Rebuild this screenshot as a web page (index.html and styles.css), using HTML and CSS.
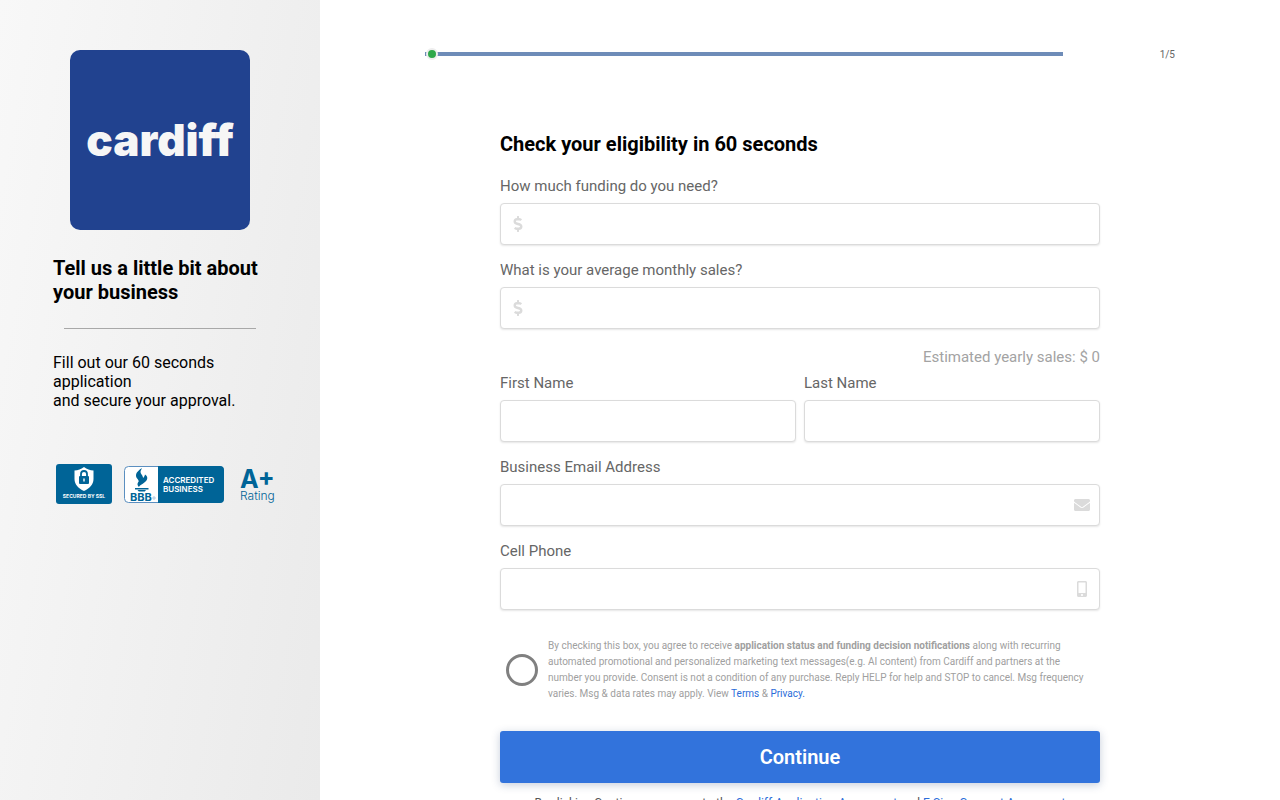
FILE: index.html
```html
<!DOCTYPE html>
<html lang="en">
<head>
  <meta charset="utf-8">
  <meta name="viewport" content="width=device-width, initial-scale=1">
  <title>Cardiff Application</title>
  <link rel="stylesheet" href="styles.css">
</head>
<body>
  <div class="page">
    <aside class="sidebar">
      <svg class="logo" viewBox="0 0 180 180" role="img" aria-label="cardiff">
        <rect width="180" height="180" rx="10" fill="#21428f"/>
        <text class="logo-text" x="90" y="106" text-anchor="middle">cardiff</text>
      </svg>

      <h2>Tell us a little bit about your business</h2>
      <hr>
      <p>Fill out our 60 seconds application<br>and secure your approval.</p>

      <svg class="badges" viewBox="0 0 220 40" role="img" aria-label="Secured by SSL, BBB Accredited Business, A+ Rating">
        <!-- SSL -->
        <rect width="56" height="40" rx="3" fill="#006497"/>
        <path d="M28 3c3 2.4 6 3.4 9.500 3.600V15c0 5.500-3.800 9.300-9.500 12-5.700-2.700-9.500-6.500-9.500-12V6.600C22 6.400 25 5.400 28 3z" fill="#fff"/>
        <rect x="23" y="12" width="10" height="8" rx="1" fill="#006497"/>
        <path d="M25 12.500v-2.500a3 3 0 0 1 6 0v2.500" fill="none" stroke="#006497" stroke-width="1.800"/>
        <path d="M28 14.500v3" stroke="#fff" stroke-width="1.400"/>
        <text class="ssl-text" x="28" y="34" text-anchor="middle">SECURED BY SSL</text>
        <!-- BBB -->
        <rect x="68.500" y="2.500" width="99" height="36" rx="4" fill="#fff" stroke="#5b8fc0"/>
        <path d="M102 2h62a4 4 0 0 1 4 4v29a4 4 0 0 1-4 4h-62z" fill="#006497"/>
        <path d="M86 4c-3 2-6 4.500-6 7.500 0 3.500 4 4 2.500 8 3-1.500 5-3.500 4.500-6-.4-2.500-2.500-3.500-2.500-5.500 0-1.500 1-2.500 1.500-4z" fill="#006497"/>
        <path d="M89 10.500c-.5 4-5 5-7 8-1 1.500-.5 3 1 4.500 1-2.500 6.500-4 8-7.500.8-2 0-4-2-5z" fill="#006497"/>
        <path d="M79 24h13.500v1.600H79zM81.500 26h8.500l-1.200 1.500h-6z" fill="#006497"/>
        <text class="bbb-text" x="74" y="37">BBB</text>
        <circle cx="98" cy="34" r="1.200" fill="none" stroke="#5b8fc0" stroke-width=".5"/>
        <text class="accredited-text" x="107" y="19">ACCREDITED</text>
        <text class="accredited-text" x="107" y="28">BUSINESS</text>
        <!-- Rating -->
        <text class="grade-text" x="184" y="24">A+</text>
        <text class="rating-text" x="184" y="36">Rating</text>
      </svg>
    </aside>

    <main class="main">
      <div class="progress">
        <div class="progress-track"><span class="progress-dot"></span></div>
        <span class="progress-step">1/5</span>
      </div>

      <form class="form">
        <h1>Check your eligibility in 60 seconds</h1>

        <div class="field">
          <label for="funding">How much funding do you need?</label>
          <div class="control">
            <svg class="icon icon-left" viewBox="0 0 288 512"><path d="M209.200 233.400l-108-31.600C88.700 198.200 80 186.500 80 173.500c0-16.300 13.200-29.500 29.500-29.500h66.300c12.200 0 24.200 3.700 34.200 10.500 6.100 4.100 14.300 3.100 19.500-2l34.800-34c7.100-6.900 6.100-18.400-1.800-24.500C238 74.800 207.400 64.100 176 64V16c0-8.800-7.200-16-16-16h-32c-8.800 0-16 7.200-16 16v48h-2.500C45.800 64-5.400 118.700.5 183.600c4.200 46.100 39.400 83.600 83.800 96.600l102.500 30c12.500 3.700 21.200 15.300 21.200 28.300 0 16.300-13.200 29.500-29.500 29.500h-66.300C100 368 88 364.300 78 357.500c-6.100-4.100-14.300-3.100-19.500 2l-34.800 34c-7.100 6.900-6.100 18.400 1.800 24.500 24.500 19.200 55.100 29.900 86.500 30v48c0 8.800 7.200 16 16 16h32c8.800 0 16-7.200 16-16v-48.200c46.600-.9 90.300-28.600 105.700-72.700 21.500-61.600-14.600-124.800-72.500-141.700z"/></svg>
            <input class="money" type="text" id="funding">
          </div>
        </div>

        <div class="field">
          <label for="sales">What is your average monthly sales?</label>
          <div class="control">
            <svg class="icon icon-left" viewBox="0 0 288 512"><path d="M209.200 233.400l-108-31.600C88.700 198.200 80 186.500 80 173.500c0-16.300 13.200-29.500 29.500-29.500h66.300c12.200 0 24.200 3.700 34.200 10.500 6.100 4.100 14.300 3.100 19.500-2l34.800-34c7.100-6.900 6.100-18.400-1.800-24.500C238 74.800 207.400 64.100 176 64V16c0-8.800-7.200-16-16-16h-32c-8.800 0-16 7.200-16 16v48h-2.500C45.800 64-5.400 118.700.5 183.600c4.200 46.100 39.400 83.600 83.800 96.600l102.500 30c12.500 3.700 21.200 15.300 21.200 28.300 0 16.300-13.200 29.500-29.500 29.500h-66.300C100 368 88 364.300 78 357.500c-6.100-4.100-14.300-3.100-19.500 2l-34.800 34c-7.100 6.900-6.100 18.400 1.800 24.500 24.500 19.200 55.100 29.900 86.500 30v48c0 8.800 7.200 16 16 16h32c8.800 0 16-7.200 16-16v-48.200c46.600-.9 90.300-28.600 105.700-72.700 21.500-61.600-14.600-124.800-72.500-141.700z"/></svg>
            <input class="money" type="text" id="sales">
          </div>
        </div>

        <div class="estimate">Estimated yearly sales: $ 0</div>

        <div class="field-row">
          <div class="field">
            <label for="firstName">First Name</label>
            <input type="text" id="firstName">
          </div>
          <div class="field">
            <label for="lastName">Last Name</label>
            <input type="text" id="lastName">
          </div>
        </div>

        <div class="field">
          <label for="email">Business Email Address</label>
          <div class="control">
            <input type="email" id="email">
            <svg class="icon icon-right" viewBox="0 0 512 512"><path d="M502.300 190.800c3.900-3.100 9.700-.2 9.700 4.700V400c0 26.500-21.500 48-48 48H48c-26.500 0-48-21.500-48-48V195.600c0-5 5.700-7.800 9.700-4.700 22.400 17.400 52.100 39.500 154.100 113.600 21.100 15.400 56.700 47.800 92.200 47.600 35.700.3 72-32.800 92.300-47.600 102-74.100 131.600-96.300 154-113.700zM256 320c23.200.4 56.600-29.200 73.400-41.400 132.700-96.300 142.800-104.700 173.400-128.700 5.800-4.500 9.200-11.500 9.200-18.900v-19c0-26.500-21.500-48-48-48H48c-26.500 0-48 21.500-48 48v19c0 7.400 3.400 14.300 9.200 18.900 30.600 23.900 40.700 32.400 173.400 128.700 16.800 12.200 50.200 41.800 73.400 41.400z"/></svg>
          </div>
        </div>

        <div class="field">
          <label for="phone">Cell Phone</label>
          <div class="control">
            <input type="tel" id="phone">
            <svg class="icon icon-right" viewBox="0 0 320 512"><path d="M272 0H48C21.500 0 0 21.500 0 48v416c0 26.500 21.500 48 48 48h224c26.500 0 48-21.500 48-48V48c0-26.500-21.500-48-48-48zM160 480c-17.700 0-32-14.300-32-32s14.300-32 32-32 32 14.300 32 32-14.300 32-32 32zm112-108c0 6.600-5.400 12-12 12H60c-6.600 0-12-5.400-12-12V60c0-6.600 5.400-12 12-12h200c6.600 0 12 5.400 12 12v312z"/></svg>
          </div>
        </div>

        <div class="consent">
          <input type="checkbox" id="consent">
          <label for="consent">By checking this box, you agree to receive <strong>application status and funding decision notifications</strong> along with recurring automated promotional and personalized marketing text messages(e.g. AI content) from Cardiff and partners at the number you provide. Consent is not a condition of any purchase. Reply HELP for help and STOP to cancel. Msg frequency varies. Msg &amp; data rates may apply. View <a href="#">Terms</a> &amp; <a href="#">Privacy.</a></label>
        </div>

        <button type="submit" class="continue-btn">Continue</button>

        <p class="agreement">By clicking Continue, you agree to the <a href="#">Cardiff Application Agreement</a> and <a href="#">E-Sign Consent Agreement</a></p>
      </form>
    </main>
  </div>
</body>
</html>
```

FILE: styles.css
```css
* {
  margin: 0;
  padding: 0;
  box-sizing: border-box;
}

body {
  font-family: Roboto, 'Liberation Sans', sans-serif;
  font-size: 16px;
  color: #000;
  background: #fff;
}

a {
  color: #2b6cd9;
  text-decoration: none;
}

.page {
  display: grid;
  grid-template-columns: 1fr 3fr;
  height: 100vh;
}

.sidebar {
  padding: 50px 44px 0 53px;
  background: linear-gradient(100deg, #f8f8f8, #eaeaea);
}

.logo {
  display: block;
  width: 180px;
  margin: 0 auto 26px 17px;
}

.logo-text {
  font-family: Inter, sans-serif;
  font-size: 44px;
  font-weight: 900;
  fill: #f6f6f6;
}

.sidebar h2 {
  font-size: 20px;
  font-weight: 700;
  line-height: 24px;
}

.sidebar hr {
  width: 192px;
  margin: 24px 0 24px 11px;
  border: none;
  border-top: 1px solid #a8a8a8;
}

.sidebar p {
  line-height: 19px;
}

.badges {
  display: block;
  width: 220px;
  margin: 54px 0 0 3px;
  font-family: Inter, sans-serif;
  font-weight: 700;
  fill: #006497;
}

.ssl-text {
  font-size: 5px;
  fill: #fff;
}

.bbb-text {
  font-size: 11px;
}

.accredited-text {
  font-size: 8px;
  font-weight: 600;
  fill: #fff;
}

.grade-text {
  font-size: 25px;
}

.rating-text {
  font-size: 12px;
  font-weight: 300;
}

.main {
  padding: 46px 105px 0;
  overflow-y: auto;
  scrollbar-width: none;
}

.progress {
  display: flex;
  align-items: center;
  justify-content: space-between;
  height: 16px;
}

.progress-track {
  width: 85%;
  height: 4px;
  display: flex;
  align-items: center;
  background: #6e8cb8;
}

.progress-dot {
  width: 12px;
  height: 12px;
  margin-left: 1px;
  flex-shrink: 0;
  border: 2px solid #eee;
  border-radius: 50%;
  background: #2ea84a;
}

.progress-step {
  font-size: 10px;
  color: #666;
}

.form {
  max-width: 600px;
  margin: 70px auto 0;
}

.form h1 {
  font-size: 20px;
  font-weight: 700;
  line-height: 24px;
  margin-bottom: 20px;
}

.field {
  margin-bottom: 15px;
}

.field label {
  display: block;
  font-size: 15px;
  line-height: 20px;
  margin-bottom: 7px;
  color: #666;
}

.field input {
  display: block;
  width: 100%;
  height: 42px;
  padding: 0 12px;
  border: 1px solid #dbdbdb;
  border-radius: 4px;
  font: inherit;
  background: #fff;
  box-shadow: 0 1px 2px rgba(10, 10, 10, 0.1);
}

.field input.money {
  padding-left: 36px;
}

.field input:focus {
  outline: none;
  border-color: #3273dc;
}

.control {
  position: relative;
}

/* icons sit over the inputs */
.icon {
  position: absolute;
  top: 13px;
  width: 36px;
  height: 16px;
  fill: #dbdbdb;
  pointer-events: none;
}

.icon-left {
  left: 0;
}

.icon-right {
  right: 0;
}

.estimate {
  margin: 18px 0 6px;
  font-size: 15px;
  line-height: 20px;
  text-align: right;
  color: #a3a3a3;
}

.field-row {
  display: grid;
  grid-template-columns: 1fr 1fr;
  gap: 8px;
}

.consent {
  display: flex;
  align-items: center;
  gap: 10px;
  margin: 28px 0 29px;
  padding: 0 6px;
}

.consent input {
  appearance: none;
  flex-shrink: 0;
  width: 32px;
  height: 32px;
  border: 3px solid #808080;
  border-radius: 50%;
}

.consent input:checked {
  background: #3273dc;
}

.consent label {
  font-size: 10px;
  line-height: 16px;
  color: #a0a0a0;
}

.continue-btn {
  display: block;
  width: 100%;
  height: 52px;
  border: none;
  border-radius: 3px;
  background: #3273dc;
  color: #fff;
  font-family: inherit;
  font-size: 20px;
  font-weight: 600;
  cursor: pointer;
  box-shadow: 0 2px 8px rgba(30, 60, 110, 0.25);
}

.agreement {
  margin-top: 11px;
  padding-bottom: 24px;
  font-size: 12px;
  line-height: 18px;
  text-align: center;
  color: #555;
}
```
